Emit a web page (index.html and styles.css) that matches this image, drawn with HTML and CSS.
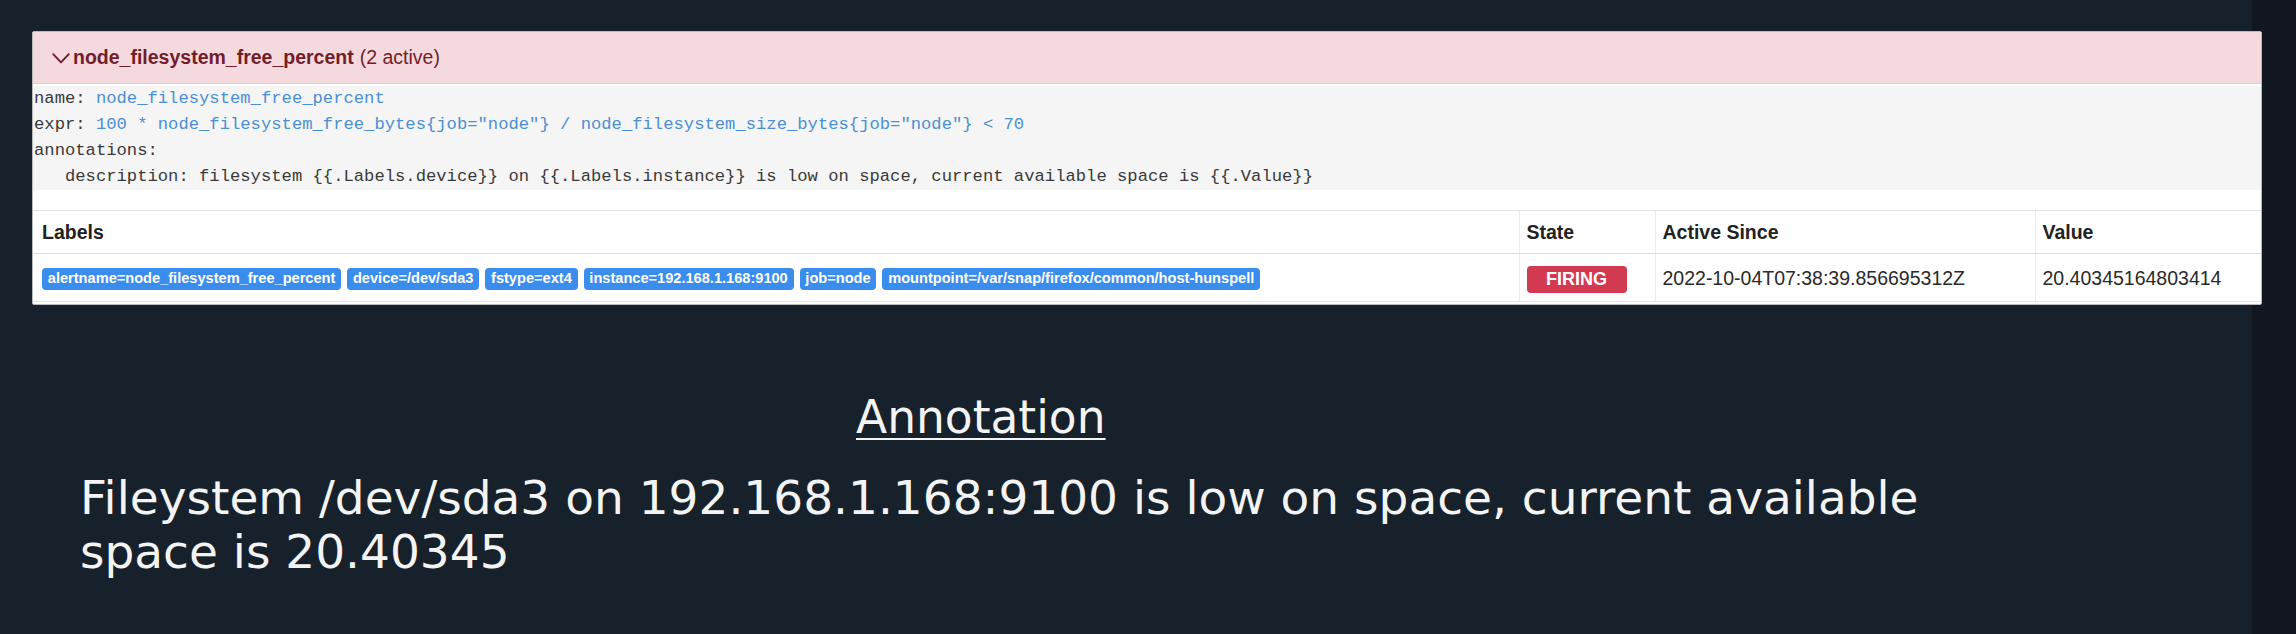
FILE: index.html
```html
<!DOCTYPE html>
<html lang="en">
<head>
<meta charset="utf-8">
<title>node_filesystem_free_percent</title>
<link rel="stylesheet" href="styles.css">
</head>
<body>
<div class="page">
  <section class="panel">
    <div class="panel-head">
      <svg class="chevron" width="18" height="11" viewBox="0 0 18 11" aria-hidden="true"><polyline points="1.2,1.2 9,9.4 16.8,1.2" fill="none" stroke="currentColor" stroke-width="1.9" stroke-linecap="round" stroke-linejoin="round"/></svg>
      <strong class="rule-name">node_filesystem_free_percent</strong>
      <span class="rule-count">(2 active)</span>
    </div>
    <pre class="rule-def"><span class="k">name:</span> <span class="v">node_filesystem_free_percent</span>
<span class="k">expr:</span> <span class="v">100 * node_filesystem_free_bytes{job="node"} / node_filesystem_size_bytes{job="node"} &lt; 70</span>
<span class="k">annotations:</span>
   <span class="k">description:</span> filesystem {{.Labels.device}} on {{.Labels.instance}} is low on space, current available space is {{.Value}}</pre>
    <table class="alerts">
      <colgroup>
        <col class="c-labels">
        <col class="c-state">
        <col class="c-since">
        <col class="c-value">
      </colgroup>
      <thead>
        <tr><th>Labels</th><th>State</th><th>Active Since</th><th>Value</th></tr>
      </thead>
      <tbody>
        <tr>
          <td>
            <div class="badges">
              <span class="badge">alertname=node_filesystem_free_percent</span>
              <span class="badge">device=/dev/sda3</span>
              <span class="badge">fstype=ext4</span>
              <span class="badge">instance=192.168.1.168:9100</span>
              <span class="badge">job=node</span>
              <span class="badge">mountpoint=/var/snap/firefox/common/host-hunspell</span>
            </div>
          </td>
          <td><span class="state">FIRING</span></td>
          <td>2022-10-04T07:38:39.856695312Z</td>
          <td>20.40345164803414</td>
        </tr>
      </tbody>
    </table>
  </section>
  <div class="slide">
    <h2 class="slide-title">Annotation</h2>
    <p class="slide-text">Fileystem /dev/sda3 on 192.168.1.168:9100 is low on space, current available space is 20.40345</p>
  </div>
</div>
</body>
</html>
```
FILE: styles.css
```css
html, body {
  margin: 0;
  padding: 0;
}
body {
  background: linear-gradient(to right, #17212b 0, #17212b 2252px, #11161f 2252px, #11161f 100%);
  height: 634px;
  overflow: hidden;
  font-family: "Liberation Sans", Arial, sans-serif;
}
.page {
  padding: 31px 0 0 32px;
}
.panel {
  width: 2228px;
  background: #ffffff;
  border: 1px solid #b9b9b9;
  border-radius: 2px;
  padding-bottom: 2px;
}
.panel-head {
  height: 51px;
  display: flex;
  align-items: center;
  padding-left: 19px;
  background: #f4dadf;
  color: #731d2a;
  font-size: 19.5px;
  border-bottom: 1px solid #efc9cf;
}
.chevron {
  margin-right: 3px;
  margin-top: 1px;
}
.rule-name {
  font-weight: 700;
  margin-right: 6px;
}
.rule-def {
  margin: 2px 0 20px;
  padding: 0 0 0 1px;
  background: #f5f5f5;
  font-family: "Liberation Mono", "Courier New", monospace;
  font-size: 17.2px;
  line-height: 26px;
  color: #3a3a3a;
}
.rule-def .v {
  color: #4a8fd3;
}
.alerts {
  width: 100%;
  border-collapse: collapse;
  table-layout: fixed;
  font-size: 19.5px;
  color: #2a2a2a;
}
.c-labels { width: 1486px; }
.c-state { width: 136px; }
.c-since { width: 380px; }
.c-value { width: 226px; }
.alerts th,
.alerts td {
  text-align: left;
  vertical-align: middle;
  padding: 0 7px;
  border-top: 1px solid #e3e3e3;
  border-left: 1px solid #ececec;
  line-height: 29px;
  white-space: nowrap;
}
.alerts th:first-child,
.alerts td:first-child {
  border-left: none;
  padding-left: 9px;
}
.alerts th {
  height: 42px;
  font-weight: 700;
  color: #222;
  border-bottom: 1px solid #dcdcdc;
}
.alerts td {
  height: 45px;
  border-bottom: 1px solid #e6e6e6;
  padding-top: 2px;
}
.badges {
  display: flex;
  flex-wrap: wrap;
  gap: 6px;
}
.badge {
  display: inline-block;
  background: #3b8ded;
  color: #ffffff;
  font-weight: 700;
  font-size: 14.6px;
  line-height: 15px;
  padding: 3.5px 5.8px;
  border-radius: 4px;
}
.state {
  display: inline-block;
  background: #d13a51;
  color: #ffffff;
  font-weight: 700;
  font-size: 18px;
  line-height: 18px;
  padding: 4.5px 19.5px;
  border-radius: 4px;
}
.slide {
  padding: 0 0 0 48px;
  color: #f4f4f4;
  font-family: "DejaVu Sans", Verdana, sans-serif;
  font-size: 47px;
  line-height: 54px;
}
.slide-title {
  margin: 86px 0 0 776px;
  font-size: 45.5px;
  font-weight: 400;
  line-height: 54px;
  text-decoration: underline;
  text-decoration-thickness: 2px;
  text-underline-offset: 5px;
}
.slide-text {
  margin: 26px 0 0;
  width: 1960px;
}
```
